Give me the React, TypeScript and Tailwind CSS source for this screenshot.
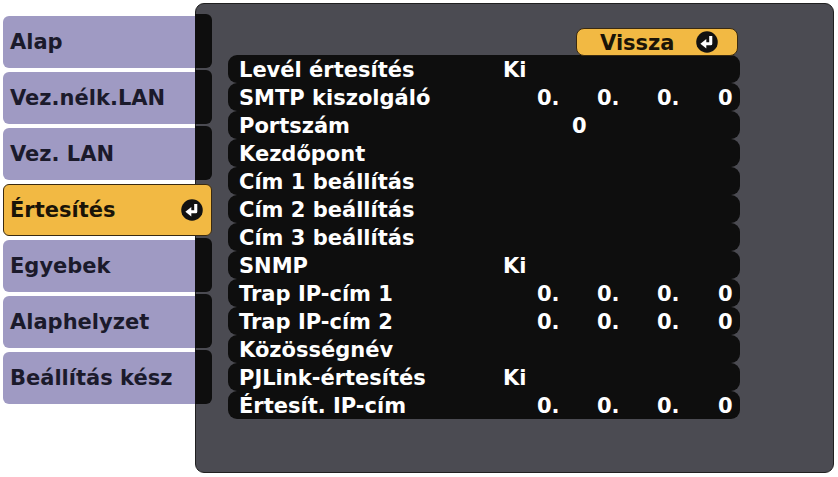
import React from 'react';

type Row = {
  label: string;
  value?: string;
  ip?: boolean;
  port?: boolean;
};

const menu = ['Alap', 'Vez.nélk.LAN', 'Vez. LAN', 'Értesítés', 'Egyebek', 'Alaphelyzet', 'Beállítás kész'];
const selected = 'Értesítés';

const rows: Row[] = [
  { label: 'Levél értesítés', value: 'Ki' },
  { label: 'SMTP kiszolgáló', ip: true },
  { label: 'Portszám', port: true },
  { label: 'Kezdőpont' },
  { label: 'Cím 1 beállítás' },
  { label: 'Cím 2 beállítás' },
  { label: 'Cím 3 beállítás' },
  { label: 'SNMP', value: 'Ki' },
  { label: 'Trap IP-cím 1', ip: true },
  { label: 'Trap IP-cím 2', ip: true },
  { label: 'Közösségnév' },
  { label: 'PJLink-értesítés', value: 'Ki' },
  { label: 'Értesít. IP-cím', ip: true },
];

function EnterIcon() {
  return (
    <svg width="22" height="22" viewBox="0 0 20 20">
      <circle cx="10" cy="10" r="9.8" fill="#111" />
      <path d="M13.4 4.6 V11.6 H8.5" fill="none" stroke="#fff" strokeWidth="2.8" strokeLinejoin="round" />
      <path d="M4 11.6 L9.4 7.2 V16 Z" fill="#fff" />
    </svg>
  );
}

function MenuItem({ label }: { label: string }) {
  if (label === selected) {
    return (
      <div className="h-[52px] w-[209px] rounded-md border border-[#3a2a10] bg-[#f2b943] flex items-center justify-between pl-[6px] pr-[8px]">
        <span className="text-[21px] font-bold text-[#1a1408] pt-[2px]">{label}</span>
        <EnterIcon />
      </div>
    );
  }
  return (
    <div className="h-[52px] w-[209px] flex">
      <div className="flex-1 rounded-l-md bg-[#9f9ac3] flex items-center pl-[7px]">
        <span className="text-[21px] font-bold text-[#1b1a2b] pt-[2px]">{label}</span>
      </div>
      <div className="w-[17px] -mt-[2px] h-[54px] rounded-r-md bg-[#0e0e0e]" />
    </div>
  );
}

function SettingRow({ row }: { row: Row }) {
  return (
    <div className="h-[28px] rounded-[9px] bg-[#0e0e0e] flex items-center pl-[11px] pt-[3px] text-white text-[21px] font-bold leading-none">
      <span className="w-[264px] shrink-0">{row.label}</span>
      {row.value && <span>{row.value}</span>}
      {row.port && <span className="ml-[69px]">0</span>}
      {row.ip && (
        <div className="flex ml-[34px]">
          <span className="w-[60px]">0.</span>
          <span className="w-[60px]">0.</span>
          <span className="w-[61px]">0.</span>
          <span>0</span>
        </div>
      )}
    </div>
  );
}

export default function App() {
  return (
    <div
      className="w-[838px] h-[477px] bg-white flex overflow-hidden"
      style={{ fontFamily: '"DejaVu Sans", "Liberation Sans", sans-serif' }}
    >
      <div className="relative z-10 flex flex-col gap-[4px] pt-[16px] pl-[3px] shrink-0">
        {menu.map((m) => (
          <MenuItem key={m} label={m} />
        ))}
      </div>
      <div className="-ml-[17px] mt-[3px] w-[639px] h-[470px] rounded-[9px] border border-[#202020] bg-[#4b4b52] pl-[32px] pt-[24px] shrink-0">
        <div className="w-[512px] flex flex-col">
          <div className="self-end mr-[2px] w-[162px] h-[28px] rounded-lg border border-[#3a2a10] bg-[#f2b943] flex items-center relative z-10">
            <span className="text-[21px] font-bold text-[#1a1408] leading-none ml-[23px] pt-[3px]">Vissza</span>
            <span className="ml-auto mr-[19px] flex">
              <EnterIcon />
            </span>
          </div>
          <div className="flex flex-col -mt-px">
            {rows.map((r) => (
              <SettingRow key={r.label} row={r} />
            ))}
          </div>
        </div>
      </div>
    </div>
  );
}
